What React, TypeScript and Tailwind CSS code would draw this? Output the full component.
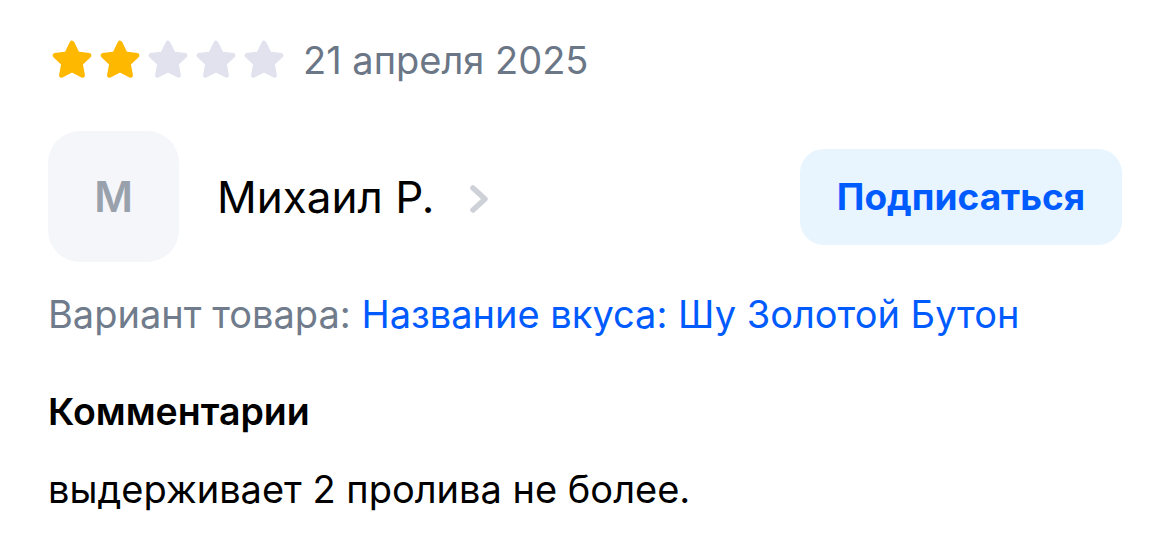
import React from "react"

const Star = ({ filled }: { filled: boolean }) => (
  <svg width="44" height="42" viewBox="0 0 24 23" className={filled ? "text-[#ffb800]" : "text-[#e1e2ee]"}>
    <path
      d="M12 2.2l2.9 5.9 6.4.9-4.7 4.5 1.2 6.4L12 16.9l-5.8 3 1.2-6.4L2.7 9l6.4-.9z"
      fill="currentColor"
      stroke="currentColor"
      strokeWidth="2.6"
      strokeLinejoin="round"
    />
  </svg>
)

const Chevron = () => (
  <svg width="26" height="32" viewBox="0 0 26 32" className="text-[#ced2d8]">
    <path d="M6 5l12 11-12 11" fill="none" stroke="currentColor" strokeWidth="5.5" strokeLinecap="round" strokeLinejoin="round" />
  </svg>
)

export default function App() {
  const rating = 2
  return (
    <div className="min-h-[543px] w-[1170px] bg-white px-12 pt-[39px] font-['Inter',sans-serif] text-black">
      <div className="flex items-center">
        <div className="ml-[2px] flex gap-[4px]">
          {[1, 2, 3, 4, 5].map(i => (
            <Star key={i} filled={i <= rating} />
          ))}
        </div>
        <span className="ml-[17px] text-[38px] leading-none text-[#6b7686]">21 апреля 2025</span>
      </div>

      <div className="mt-[50px] flex items-center justify-between">
        <div className="flex items-center">
          <div className="flex h-[131px] w-[131px] items-center justify-center rounded-[32px] bg-[#f5f6fa] text-[42px] font-semibold text-[#99a2ac]">
            М
          </div>
          <span className="ml-[38px] text-[44px] leading-none">Михаил Р.</span>
          <span className="ml-[32px] mt-1">
            <Chevron />
          </span>
        </div>
        <button className="h-[96px] w-[322px] rounded-[24px] bg-[#e8f5fe] text-[37px] font-bold text-[#005bff]">
          Подписаться
        </button>
      </div>

      <div className="mt-[33px] text-[38px] leading-none">
        <span className="text-[#707b8b]">Вариант товара: </span>
        <span className="text-[#005bff]">Название вкуса: Шу Золотой Бутон</span>
      </div>

      <div className="mt-[60px] text-[37.5px] font-semibold leading-none">Комментарии</div>
      <div className="mt-[39px] text-[38px] leading-none">выдерживает 2 пролива не более.</div>
    </div>
  )
}
